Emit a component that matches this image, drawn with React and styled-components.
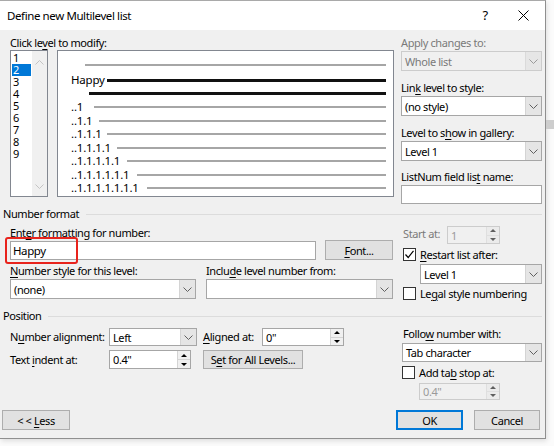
import React from "react";
import styled, { createGlobalStyle } from "styled-components";

const GlobalStyle = createGlobalStyle`
  html, body {
    margin: 0;
    padding: 0;
    background: #fff;
  }
  body {
    font-family: "Noto Sans", "Open Sans", sans-serif;
    font-size: 11px;
    letter-spacing: -0.4px;
    color: #000;
  }
  * {
    box-sizing: border-box;
  }
`;

const previewRows = [
  { h: 14, w: 14, text: "", tone: "light" },
  { h: 16, w: 36, text: "Happy", tone: "dark" },
  { h: 11, w: 18, text: "", tone: "dark" },
  { h: 15, w: 23, text: "..1", tone: "light" },
  { h: 13.5, w: 28, text: "..1.1", tone: "light" },
  { h: 13.5, w: 36, text: "..1.1.1", tone: "light" },
  { h: 13.5, w: 46, text: "..1.1.1.1", tone: "light" },
  { h: 13.5, w: 56, text: "..1.1.1.1.1", tone: "light" },
  { h: 13.5, w: 66, text: "..1.1.1.1.1.1", tone: "light" },
  { h: 13.5, w: 76, text: "..1.1.1.1.1.1.1", tone: "light" },
];

const levels = ["1", "2", "3", "4", "5", "6", "7", "8", "9"];

const Chevron = ({ color = "#606060" }) => (
  <svg width="9" height="5" viewBox="0 0 9 5">
    <polyline points="0.5,0.5 4.5,4.5 8.5,0.5" fill="none" stroke={color} strokeWidth="1" />
  </svg>
);

const ChevronUp = ({ color = "#c4c4c4" }) => (
  <svg width="9" height="5" viewBox="0 0 9 5">
    <polyline points="0.5,4.5 4.5,0.5 8.5,4.5" fill="none" stroke={color} strokeWidth="1" />
  </svg>
);

const Check = () => (
  <svg width="11" height="11" viewBox="0 0 11 11">
    <polyline points="1.5,5.5 4.2,8.5 9.5,1.8" fill="none" stroke="#000" strokeWidth="1.2" />
  </svg>
);

const CloseIcon = () => (
  <svg width="11" height="11" viewBox="0 0 11 11">
    <line x1="0.5" y1="0.5" x2="10.5" y2="10.5" stroke="#000" strokeWidth="1" />
    <line x1="10.5" y1="0.5" x2="0.5" y2="10.5" stroke="#000" strokeWidth="1" />
  </svg>
);

function Combo({ value, width, height = 20, disabled, ml }) {
  return (
    <ComboBox $w={width} $h={height} $disabled={disabled} $ml={ml}>
      <ComboText>{value}</ComboText>
      <ComboArrow $disabled={disabled}>
        <Chevron color={disabled ? "#9a9a9a" : "#606060"} />
      </ComboArrow>
    </ComboBox>
  );
}

function Spin({ value, width, height = 18, disabled, ml }) {
  return (
    <SpinBox $w={width} $h={height} $disabled={disabled} $ml={ml}>
      <SpinText>{value}</SpinText>
      <SpinButtons $disabled={disabled}>
        <SpinHalf>
          <Tri $up />
        </SpinHalf>
        <SpinHalf>
          <Tri />
        </SpinHalf>
      </SpinButtons>
    </SpinBox>
  );
}

function CheckRow({ checked, children, mt }) {
  return (
    <CheckLine $mt={mt}>
      <CheckBox>{checked && <Check />}</CheckBox>
      <span>{children}</span>
    </CheckLine>
  );
}

export default function App() {
  return (
    <Page>
      <GlobalStyle />
      <Dialog>
        <TitleBar>
          <Title>Define new Multilevel list</Title>
          <HelpButton>?</HelpButton>
          <CloseButton>
            <CloseIcon />
          </CloseButton>
        </TitleBar>

        <Body>
          <TopSection>
            <Column $w={384}>
              <Label>
                Click le<Key>v</Key>el to modify:
              </Label>
              <PreviewRow>
                <LevelList>
                  <LevelItems>
                    {levels.map((l) => (
                      <LevelItem key={l} $selected={l === "2"}>
                        {l}
                      </LevelItem>
                    ))}
                  </LevelItems>
                  <ListScroll>
                    <ChevronUp />
                    <Chevron color="#c4c4c4" />
                  </ListScroll>
                </LevelList>
                <Preview>
                  {previewRows.map((r, i) => (
                    <PreviewLine key={i} $h={r.h}>
                      <PreviewNum $w={r.w}>{r.text}</PreviewNum>
                      <Rule $tone={r.tone} />
                    </PreviewLine>
                  ))}
                </Preview>
              </PreviewRow>
            </Column>

            <Column $w={141}>
              <Label $muted>Apply changes to:</Label>
              <Field $mt={1}>
                <Combo value="Whole list" width={141} disabled />
              </Field>
              <Label $mt={10}>
                Lin<Key>k</Key> level to style:
              </Label>
              <Field $mt={1}>
                <Combo value="(no style)" width={141} />
              </Field>
              <Label $mt={10}>
                Level to s<Key>h</Key>ow in gallery:
              </Label>
              <Field $mt={1}>
                <Combo value="Level 1" width={141} />
              </Field>
              <Label $mt={9}>
                ListNum field lis<Key>t</Key> name:
              </Label>
              <TextInput $w={141} $h={19} $mt={1} />
            </Column>
          </TopSection>

          <GroupHeader $mt={3}>
            <span>Number format</span>
            <GroupRule />
          </GroupHeader>

          <Section $mt={5}>
            <Column $w={384}>
              <Label>
                Ent<Key>e</Key>r formatting for number:
              </Label>
              <FieldRow $gap={9}>
                <Highlighted>
                  <TextInput $w={306} $h={19}>
                    Happy
                  </TextInput>
                  <RedMark />
                </Highlighted>
                <Button $w={68}>
                  <span>
                    <Key>F</Key>ont...
                  </span>
                </Button>
              </FieldRow>
              <FieldRow $gap={10} $mt={4}>
                <Column $w={186}>
                  <Label>
                    <Key>N</Key>umber style for this level:
                  </Label>
                  <Field $mt={1}>
                    <Combo value="(none)" width={186} />
                  </Field>
                </Column>
                <Column $w={187}>
                  <Label>
                    Inclu<Key>d</Key>e level number from:
                  </Label>
                  <Field $mt={1}>
                    <Combo value="" width={187} />
                  </Field>
                </Column>
              </FieldRow>
            </Column>

            <Column $w={139} $ml={9}>
              <FieldRow>
                <Label $muted $w={44} $mt={-2}>
                  Start at:
                </Label>
                <Spin value="1" width={53} disabled />
              </FieldRow>
              <CheckRow checked mt={4}>
                <Key>R</Key>estart list after:
              </CheckRow>
              <Field $mt={3} $ml={17}>
                <Combo value="Level 1" width={122} />
              </Field>
              <CheckRow mt={3}>
                Le<Key>g</Key>al style numbering
              </CheckRow>
            </Column>
          </Section>

          <GroupHeader $mt={9}>
            <span>Position</span>
            <GroupRule />
          </GroupHeader>

          <Section $mt={4}>
            <Column $w={384}>
              <FieldRow $mt={1}>
                <Label $w={99}>
                  N<Key>u</Key>mber alignment:
                </Label>
                <Combo value="Left" width={88} height={18} />
                <Label $w={59} $ml={6}>
                  <Key>A</Key>ligned at:
                </Label>
                <Spin value={'0"'} width={82} />
              </FieldRow>
              <FieldRow $mt={4}>
                <Label $w={99}>
                  Text <Key>i</Key>ndent at:
                </Label>
                <Spin value={'0.4"'} width={82} height={19} />
                <Button $w={100} $h={19} $ml={12}>
                  <span>
                    S<Key>e</Key>t for All Levels...
                  </span>
                </Button>
              </FieldRow>
            </Column>

            <Column $w={140} $ml={8}>
              <Label $ml={1}>
                Follo<Key>w</Key> number with:
              </Label>
              <Field $mt={2}>
                <Combo value="Tab character" width={140} height={19} />
              </Field>
              <CheckRow mt={4}>
                Add ta<Key>b</Key> stop at:
              </CheckRow>
              <Field $mt={4} $ml={17}>
                <Spin value={'0.4"'} width={81} height={17} disabled />
              </Field>
            </Column>
          </Section>

          <ButtonBar>
            <Button $w={68} $ml={-1}>
              <span>
                &lt; &lt; <Key>L</Key>ess
              </span>
            </Button>
            <Spacer />
            <Button $w={67} $primary>
              OK
            </Button>
            <Button $w={66} $ml={11} $mr={2}>
              Cancel
            </Button>
          </ButtonBar>
        </Body>
      </Dialog>
      <BackStrip>
        <BackThumb />
      </BackStrip>
    </Page>
  );
}

const Page = styled.div`
  display: flex;
  width: 554px;
  height: 446px;
  overflow: hidden;
  background: #fbfbfb;
`;

const Dialog = styled.div`
  width: 546px;
  height: 439px;
  flex-shrink: 0;
  display: flex;
  flex-direction: column;
  background: #f0f0f0;
  border-top: 1px solid #a9a9a9;
  border-right: 1px solid #8f8f8f;
  border-bottom: 1px solid #8f8f8f;
  box-shadow: 1px 2px 5px rgba(0, 0, 0, 0.12);
`;

const TitleBar = styled.div`
  height: 29px;
  display: flex;
  align-items: center;
  padding-left: 7px;
  background: #fff;
`;

const Title = styled.div`
  flex: 1;
  font-size: 11.5px;
  margin-top: -1px;
`;

const HelpButton = styled.div`
  width: 36px;
  text-align: center;
  font-size: 13px;
  margin-top: -1px;
`;

const CloseButton = styled.div`
  width: 40px;
  margin-right: 2px;
  display: flex;
  justify-content: center;
  margin-top: -1px;
`;

const Body = styled.div`
  flex: 1;
  display: flex;
  flex-direction: column;
  padding: 0 3px 8px 3px;
`;

const TopSection = styled.div`
  display: flex;
  gap: 7px;
  padding-left: 7px;
  margin-top: 6px;
`;

const Section = styled.div`
  display: flex;
  padding-left: 7px;
  margin-top: ${(p) => p.$mt || 0}px;
`;

const Column = styled.div`
  width: ${(p) => p.$w}px;
  margin-left: ${(p) => p.$ml || 0}px;
  display: flex;
  flex-direction: column;
  flex-shrink: 0;
`;

const Label = styled.div`
  height: 14px;
  line-height: 14px;
  white-space: nowrap;
  color: ${(p) => (p.$muted ? "#7a7a7a" : "#000")};
  margin-top: ${(p) => p.$mt || 0}px;
  margin-left: ${(p) => p.$ml || 0}px;
  ${(p) => (p.$w ? `width: ${p.$w}px; flex-shrink: 0;` : "")}
`;

const Key = styled.span`
  text-decoration: underline;
  text-underline-offset: 2px;
`;

const Field = styled.div`
  margin-top: ${(p) => p.$mt || 0}px;
  margin-left: ${(p) => p.$ml || 0}px;
`;

const FieldRow = styled.div`
  display: flex;
  align-items: center;
  gap: ${(p) => p.$gap || 0}px;
  margin-top: ${(p) => p.$mt || 0}px;
`;

const PreviewRow = styled.div`
  display: flex;
  gap: 9px;
`;

const LevelList = styled.div`
  width: 38px;
  height: 147px;
  display: flex;
  background: #fff;
  border: 1px solid #828790;
`;

const LevelItems = styled.div`
  width: 22px;
  padding: 1px 0 0 1px;
`;

const LevelItem = styled.div`
  height: 12px;
  line-height: 12px;
  width: 19px;
  padding-left: 1px;
  background: ${(p) => (p.$selected ? "#0078d7" : "transparent")};
  color: ${(p) => (p.$selected ? "#fff" : "#000")};
`;

const ListScroll = styled.div`
  width: 15px;
  margin-left: auto;
  background: #f0f0f0;
  display: flex;
  flex-direction: column;
  align-items: center;
  justify-content: space-between;
  padding: 9px 0 7px;
`;

const Preview = styled.div`
  width: 337px;
  height: 147px;
  background: #fff;
  border: 1px solid #828790;
  padding: 7px 7px 0 13px;
`;

const PreviewLine = styled.div`
  height: ${(p) => p.$h}px;
  display: flex;
  align-items: center;
`;

const PreviewNum = styled.div`
  width: ${(p) => p.$w}px;
  flex-shrink: 0;
  white-space: nowrap;
  font-size: 11.5px;
  letter-spacing: -0.2px;
  line-height: 12px;
  overflow: visible;
`;

const Rule = styled.div`
  flex: 1;
  height: ${(p) => (p.$tone === "dark" ? 3 : 2)}px;
  background: ${(p) => (p.$tone === "dark" ? "#111" : "#a6a6a6")};
`;

const ComboBox = styled.div`
  width: ${(p) => p.$w}px;
  height: ${(p) => p.$h}px;
  margin-left: ${(p) => p.$ml || 0}px;
  display: flex;
  flex-shrink: 0;
  border: 1px solid ${(p) => (p.$disabled ? "#cccccc" : "#a6a6a6")};
  background: ${(p) => (p.$disabled ? "#f0f0f0" : "#fff")};
  color: ${(p) => (p.$disabled ? "#7a7a7a" : "#000")};
`;

const ComboText = styled.div`
  flex: 1;
  padding-left: 3px;
  display: flex;
  align-items: center;
  white-space: nowrap;
`;

const ComboArrow = styled.div`
  width: 16px;
  display: flex;
  align-items: center;
  justify-content: center;
  background: ${(p) => (p.$disabled ? "#e6e6e6" : "#e5e5e5")};
  border-left: 1px solid ${(p) => (p.$disabled ? "#dadada" : "#d4d4d4")};
`;

const SpinBox = styled.div`
  width: ${(p) => p.$w}px;
  height: ${(p) => p.$h}px;
  margin-left: ${(p) => p.$ml || 0}px;
  display: flex;
  flex-shrink: 0;
  border: 1px solid ${(p) => (p.$disabled ? "#cccccc" : "#a6a6a6")};
  background: ${(p) => (p.$disabled ? "#f0f0f0" : "#fff")};
  color: ${(p) => (p.$disabled ? "#9a9a9a" : "#000")};
`;

const SpinText = styled.div`
  flex: 1;
  padding-left: 3px;
  display: flex;
  align-items: center;
  white-space: nowrap;
`;

const SpinButtons = styled.div`
  width: 13px;
  display: flex;
  flex-direction: column;
  border-left: 1px solid #d4d4d4;
  background: ${(p) => (p.$disabled ? "#e9e9e9" : "#f0f0f0")};
  opacity: ${(p) => (p.$disabled ? 0.6 : 1)};
`;

const SpinHalf = styled.div`
  flex: 1;
  display: flex;
  align-items: center;
  justify-content: center;
  & + & {
    border-top: 1px solid #d4d4d4;
  }
`;

const Tri = styled.div`
  width: 0;
  height: 0;
  border-left: 3px solid transparent;
  border-right: 3px solid transparent;
  ${(p) =>
    p.$up ? "border-bottom: 3px solid #000;" : "border-top: 3px solid #000;"}
`;

const TextInput = styled.div`
  width: ${(p) => p.$w}px;
  height: ${(p) => p.$h}px;
  margin-top: ${(p) => p.$mt || 0}px;
  flex-shrink: 0;
  background: #fff;
  border: 1px solid #a6a6a6;
  padding-left: 2px;
  display: flex;
  align-items: center;
  font-size: 11.5px;
`;

const Highlighted = styled.div`
  position: relative;
  display: flex;
`;

const RedMark = styled.div`
  position: absolute;
  left: -5px;
  top: -4px;
  width: 73px;
  height: 27px;
  border: 2px solid #e8231c;
  border-radius: 3px;
`;

const Button = styled.div`
  width: ${(p) => p.$w}px;
  height: ${(p) => p.$h || 20}px;
  margin-left: ${(p) => p.$ml || 0}px;
  margin-right: ${(p) => p.$mr || 0}px;
  flex-shrink: 0;
  display: flex;
  align-items: center;
  justify-content: center;
  white-space: nowrap;
  background: #e1e1e1;
  border: 1px solid ${(p) => (p.$primary ? "#0078d7" : "#adadad")};
  box-shadow: ${(p) => (p.$primary ? "inset 0 0 0 1px #0078d7" : "none")};
`;

const CheckLine = styled.div`
  display: flex;
  align-items: center;
  gap: 4px;
  height: 13px;
  margin-top: ${(p) => p.$mt || 0}px;
  white-space: nowrap;
`;

const CheckBox = styled.div`
  width: 13px;
  height: 13px;
  flex-shrink: 0;
  border: 1px solid #333;
  background: #fff;
  display: flex;
  align-items: center;
  justify-content: center;
`;

const GroupHeader = styled.div`
  display: flex;
  align-items: center;
  height: 14px;
  line-height: 14px;
  margin-top: ${(p) => p.$mt || 0}px;
`;

const GroupRule = styled.div`
  flex: 1;
  height: 1px;
  margin-left: 7px;
  background: #dcdcdc;
`;

const ButtonBar = styled.div`
  display: flex;
  margin-top: auto;
`;

const Spacer = styled.div`
  flex: 1;
`;

const BackStrip = styled.div`
  flex: 1;
  display: flex;
  flex-direction: column;
`;

const BackThumb = styled.div`
  margin-top: 120px;
  height: 9px;
  background: #cdcdcd;
`;
